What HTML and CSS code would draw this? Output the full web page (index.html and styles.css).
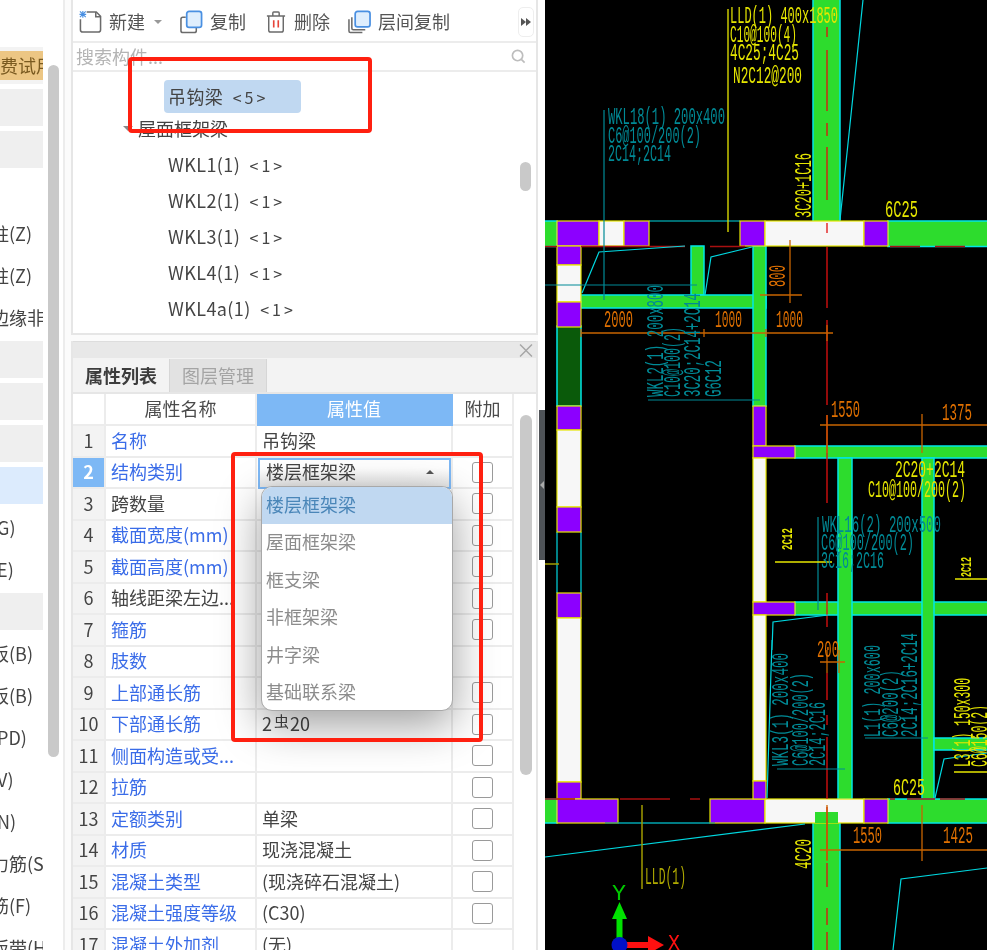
FILE: index.html
```html
<!DOCTYPE html>
<html lang="zh-CN">
<head>
<meta charset="utf-8">
<title>属性列表</title>
<link rel="stylesheet" href="styles.css">
</head>
<body>
<div class="app">
  <aside class="side">
    <div class="side-list">
      <div class="side-row trial"><span class="trial-tag">免费试用</span></div>
      <div class="side-row block"></div>
      <div class="side-row block"></div>
      <div class="side-row"></div>
      <div class="side-row">构造柱(Z)</div>
      <div class="side-row">砌体柱(Z)</div>
      <div class="side-row">约束边缘非阴影区</div>
      <div class="side-row block"></div>
      <div class="side-row block"></div>
      <div class="side-row block"></div>
      <div class="side-row current"></div>
      <div class="side-row">连梁(G)</div>
      <div class="side-row">圈梁(E)</div>
      <div class="side-row block"></div>
      <div class="side-row">现浇板(B)</div>
      <div class="side-row">螺旋板(B)</div>
      <div class="side-row">坡道(PD)</div>
      <div class="side-row">柱帽(V)</div>
      <div class="side-row">板洞(N)</div>
      <div class="side-row">板受力筋(S)</div>
      <div class="side-row">板负筋(F)</div>
      <div class="side-row">楼层板带(H)</div>
    </div>
    <div class="side-scroll"></div>
  </aside>

  <main class="mid">
    <section class="tree-panel">
      <div class="toolbar">
        <div class="tool tool-new">
          <svg class="ico" viewBox="0 0 24 24"><path class="ico-gray" d="M1.5 9v11a2.5 2.5 0 0 0 2.500 2.500h16a2.500 2.500 0 0 0 2.500-2.500V6l-4.500-4.500H8"/><path class="ico-gray" d="M17.500 1.500V6.500h5"/><path class="ico-star" d="M1 1l6 6M7 1L1 7M4 .5v7M.5 4h7"/></svg>
          <span>新建</span><i class="drop-caret"></i>
        </div>
        <div class="tool tool-copy">
          <svg class="ico" viewBox="0 0 24 24"><path class="ico-gray" d="M6 7H3a2 2 0 0 0-2 2v12a2 2 0 0 0 2 2h12a2 2 0 0 0 2-2v-3"/><rect class="ico-blue" x="7" y="1" width="15.500" height="16.500" rx="2.500"/></svg>
          <span>复制</span>
        </div>
        <div class="tool tool-del">
          <svg class="ico ico-del" viewBox="0 0 22 24"><path class="ico-gray" d="M1 5.500h20M7.500 5.500V2a1 1 0 0 1 1-1h5a1 1 0 0 1 1 1v3.500M3 5.500V21a2 2 0 0 0 2 2h12a2 2 0 0 0 2-2V5.500"/><path class="ico-red" d="M8.500 10v8M13.500 10v8"/></svg>
          <span>删除</span>
        </div>
        <div class="tool tool-layer">
          <svg class="ico" viewBox="0 0 24 24"><path class="ico-gray" d="M1 9v12.500a1.500 1.500 0 0 0 1.500 1.500H15"/><path class="ico-gray" d="M4 7v11.500a1.500 1.500 0 0 0 1.500 1.500H18"/><rect class="ico-blue" x="7.500" y="1" width="15.500" height="16" rx="2.500"/></svg>
          <span>层间复制</span>
        </div>
        <div class="more"><i></i><i></i></div>
      </div>
      <div class="search">
        <span>搜索构件...</span>
        <svg class="search-ico" viewBox="0 0 16 16"><circle cx="7" cy="7" r="5.500"/><path d="M11 11l3.500 3.500"/></svg>
      </div>
      <div class="tree">
        <div class="tree-list">
          <div class="node node-sel">吊钩梁 <em>&lt;5&gt;</em></div>
          <div class="node-group"><i class="tree-caret"></i>屋面框架梁</div>
          <div class="node">WKL1(1) <em>&lt;1&gt;</em></div>
          <div class="node">WKL2(1) <em>&lt;1&gt;</em></div>
          <div class="node">WKL3(1) <em>&lt;1&gt;</em></div>
          <div class="node">WKL4(1) <em>&lt;1&gt;</em></div>
          <div class="node">WKL4a(1) <em>&lt;1&gt;</em></div>
        </div>
        <div class="tree-scroll"></div>
      </div>
    </section>

    <section class="prop-panel">
      <div class="prop-title"><span class="close">×</span></div>
      <div class="tabs">
        <div class="tab tab-on">属性列表</div>
        <div class="tab">图层管理</div>
      </div>
      <div class="prop-body">
        <div class="table">
          <div class="row head">
            <div class="c c-no"></div><div class="c c-name">属性名称</div><div class="c c-val c-head-on">属性值</div><div class="c c-add">附加</div>
          </div>
          <div class="row"><div class="c c-no">1</div><div class="c c-name link">名称</div><div class="c c-val">吊钩梁</div><div class="c c-add"></div></div>
          <div class="row row-open"><div class="c c-no c-no-on">2</div><div class="c c-name link">结构类别</div>
            <div class="c c-val c-combo">
              <div class="combo">楼层框架梁<i class="combo-caret"></i></div>
              <ul class="menu">
                <li class="menu-on">楼层框架梁</li>
                <li>屋面框架梁</li>
                <li>框支梁</li>
                <li>非框架梁</li>
                <li>井字梁</li>
                <li>基础联系梁</li>
              </ul>
            </div>
            <div class="c c-add"><i class="check"></i></div></div>
          <div class="row"><div class="c c-no">3</div><div class="c c-name">跨数量</div><div class="c c-val"></div><div class="c c-add"><i class="check"></i></div></div>
          <div class="row"><div class="c c-no">4</div><div class="c c-name link">截面宽度(mm)</div><div class="c c-val"></div><div class="c c-add"><i class="check"></i></div></div>
          <div class="row"><div class="c c-no">5</div><div class="c c-name link">截面高度(mm)</div><div class="c c-val"></div><div class="c c-add"><i class="check"></i></div></div>
          <div class="row"><div class="c c-no">6</div><div class="c c-name">轴线距梁左边...</div><div class="c c-val"></div><div class="c c-add"><i class="check"></i></div></div>
          <div class="row"><div class="c c-no">7</div><div class="c c-name link">箍筋</div><div class="c c-val"></div><div class="c c-add"><i class="check"></i></div></div>
          <div class="row"><div class="c c-no">8</div><div class="c c-name link">肢数</div><div class="c c-val"></div><div class="c c-add"></div></div>
          <div class="row"><div class="c c-no">9</div><div class="c c-name link">上部通长筋</div><div class="c c-val"></div><div class="c c-add"><i class="check"></i></div></div>
          <div class="row"><div class="c c-no">10</div><div class="c c-name link">下部通长筋</div><div class="c c-val">2<span class="rebar">虫</span>20</div><div class="c c-add"><i class="check"></i></div></div>
          <div class="row"><div class="c c-no">11</div><div class="c c-name link">侧面构造或受...</div><div class="c c-val"></div><div class="c c-add"><i class="check"></i></div></div>
          <div class="row"><div class="c c-no">12</div><div class="c c-name link">拉筋</div><div class="c c-val"></div><div class="c c-add"><i class="check"></i></div></div>
          <div class="row"><div class="c c-no">13</div><div class="c c-name link">定额类别</div><div class="c c-val">单梁</div><div class="c c-add"><i class="check"></i></div></div>
          <div class="row"><div class="c c-no">14</div><div class="c c-name link">材质</div><div class="c c-val">现浇混凝土</div><div class="c c-add"><i class="check"></i></div></div>
          <div class="row"><div class="c c-no">15</div><div class="c c-name link">混凝土类型</div><div class="c c-val">(现浇碎石混凝土)</div><div class="c c-add"><i class="check"></i></div></div>
          <div class="row"><div class="c c-no">16</div><div class="c c-name link">混凝土强度等级</div><div class="c c-val">(C30)</div><div class="c c-add"><i class="check"></i></div></div>
          <div class="row"><div class="c c-no">17</div><div class="c c-name link">混凝土外加剂</div><div class="c c-val">(无)</div><div class="c c-add"></div></div>
        </div>
        <div class="prop-rail"><div class="prop-scroll"></div></div>
      </div>
    </section>
  </main>

  <div class="splitter"><div class="split-handle"><i></i></div></div>

  <svg class="cad" viewBox="0 0 442 950" width="442" height="950">
    <g class="beam">
      <rect x="268" y="-2" width="27" height="224"/>
      <rect x="-2" y="221" width="14" height="25.500"/>
      <rect x="343" y="221" width="101" height="25.500"/>
      <rect x="146" y="246" width="13" height="49"/>
      <rect x="36" y="295" width="185" height="13"/>
      <rect x="208" y="246" width="13" height="160"/>
      <rect class="beam-dark" x="12" y="326" width="24" height="80"/>
      <rect x="250" y="446" width="194" height="12"/>
      <rect x="250" y="602" width="194" height="13"/>
      <rect x="293" y="458" width="14" height="341"/>
      <rect x="377" y="458" width="12" height="341"/>
      <rect x="389" y="738" width="55" height="12"/>
      <rect x="-2" y="799" width="14" height="24"/>
      <rect x="343" y="799" width="101" height="24"/>
      <rect x="268" y="812" width="27" height="140"/>
    </g>
    <path class="cy" d="M12 532V593M36 532V593M104 221H195M73 823H165"/>
    <g class="wall">
      <rect class="pu" x="12" y="221" width="42" height="25"/>
      <rect class="wh" x="54" y="221" width="25" height="25"/>
      <rect class="pu" x="79" y="221" width="25" height="25"/>
      <rect class="pu" x="195" y="221" width="25" height="25"/>
      <rect class="wh" x="220" y="221" width="99" height="25"/>
      <rect class="pu" x="319" y="221" width="24" height="25"/>
      <rect class="pu" x="12" y="246" width="24" height="19"/>
      <rect class="wh" x="12" y="265" width="24" height="37"/>
      <rect class="pu" x="12" y="302" width="24" height="25"/>
      <rect class="pu" x="12" y="406" width="24" height="24"/>
      <rect class="wh" x="12" y="430" width="24" height="77"/>
      <rect class="pu" x="12" y="507" width="24" height="25"/>
      <rect class="pu" x="12" y="593" width="24" height="25"/>
      <rect class="wh" x="12" y="618" width="24" height="164"/>
      <rect class="pu" x="12" y="782" width="24" height="17"/>
      <rect class="pu" x="12" y="799" width="61" height="24"/>
      <rect class="pu" x="165" y="799" width="55" height="24"/>
      <rect class="wh" x="220" y="799" width="99" height="24"/>
      <rect class="pu" x="319" y="799" width="24" height="24"/>
      <rect class="pu" x="208" y="406" width="13" height="40"/>
      <rect class="pu" x="208" y="446" width="42" height="12"/>
      <rect class="wh" x="208" y="458" width="13" height="144"/>
      <rect class="pu" x="208" y="602" width="42" height="13"/>
      <rect class="wh" x="208" y="615" width="13" height="166"/>
      <rect class="pu" x="208" y="781" width="13" height="18"/>
    </g>
    <rect class="notch" x="270" y="812" width="23" height="11"/>

    <path class="red" d="M282 27V37M282 50V111M282 123V136M282 147V200M282 223V233M282 247V308M282 320V405M282 415V503M282 593V627M282 673V700M282 715V725M282 737V799M282 807V860M282 863V887M282 908V925M282 932V950"/>
    <path class="red-dark" d="M0 246.500H12M36 246.500H140M165 246.500H200M345 246.500H375M390 246.500H420M0 799H30M75 799H125M145 799H155M345 799H350M362 799H390M395 799H420"/>
    <path class="cy" d="M318 0L295 220M37 293L54 252L140 246M160 295L166 257L207 247M227 650L228 622L283 615M0 857L260 824M227 640L222 798M348 950L356 879L442 868M390 798L399 759L442 753"/>
    <path class="te" d="M59 110V300M0 285H152M103 400H215M273 517V610M232 769H300M320 738H383M60 823H170"/>
    <path class="ye" d="M183 9V232M230 562H287M410 579H442M409 772H442"/>
    <path class="ol" d="M97 805V889M0 564H14"/>
    <path class="or" d="M36 333H288M245 240V303M215 295H257M36 333m0-4v8M159 329v8M221 329v8M282 325v16M275 425H442M282 415V453M377 414V453M275 662H300M282 650V673M294 650V673M275 850H442M282 805V861M377 805V861"/>

    <g class="t-ye">
      <text x="185" y="23" textLength="108" lengthAdjust="spacingAndGlyphs">LLD(1) 400x1850</text>
      <text x="185" y="42" textLength="67" lengthAdjust="spacingAndGlyphs">C10@100(4)</text>
      <text x="185" y="60" textLength="69" lengthAdjust="spacingAndGlyphs">4C25;4C25</text>
      <text x="188" y="83" textLength="69" lengthAdjust="spacingAndGlyphs">N2C12@200</text>
      <text transform="translate(266 218) rotate(-90)" textLength="65" lengthAdjust="spacingAndGlyphs">3C20+1C16</text>
      <text x="340" y="217" textLength="33" lengthAdjust="spacingAndGlyphs">6C25</text>
      <text x="350" y="477" textLength="70" lengthAdjust="spacingAndGlyphs">2C20+2C14</text>
      <text x="323" y="497" textLength="98" lengthAdjust="spacingAndGlyphs">C10@100/200(2)</text>
      <text transform="translate(425 767) rotate(-90)" textLength="89" lengthAdjust="spacingAndGlyphs">L3(1) 150x300</text>
      <text transform="translate(442 767) rotate(-90)" textLength="62" lengthAdjust="spacingAndGlyphs">C6@150(2)</text>
      <text x="348" y="795" textLength="32" lengthAdjust="spacingAndGlyphs">6C25</text>
      <text transform="translate(266 869) rotate(-90)" textLength="30" lengthAdjust="spacingAndGlyphs">4C20</text>
      <text class="t-tiny" transform="translate(247 550) rotate(-90)" textLength="22" lengthAdjust="spacingAndGlyphs">2C12</text>
      <text class="t-tiny" transform="translate(426 577) rotate(-90)" textLength="20" lengthAdjust="spacingAndGlyphs">2C12</text>
    </g>
    <g class="t-ol">
      <text x="100" y="884" textLength="41" lengthAdjust="spacingAndGlyphs">LLD(1)</text>
    </g>
    <g class="t-te">
      <text x="63" y="124" textLength="117" lengthAdjust="spacingAndGlyphs">WKL18(1) 200x400</text>
      <text x="63" y="143" textLength="93" lengthAdjust="spacingAndGlyphs">C6@100/200(2)</text>
      <text x="63" y="161" textLength="63" lengthAdjust="spacingAndGlyphs">2C14;2C14</text>
      <text transform="translate(118 397) rotate(-90)" textLength="112" lengthAdjust="spacingAndGlyphs">WKL2(1) 200x800</text>
      <text transform="translate(135 397) rotate(-90)" textLength="70" lengthAdjust="spacingAndGlyphs">C10@100(2)</text>
      <text transform="translate(155 397) rotate(-90)" textLength="104" lengthAdjust="spacingAndGlyphs">3C20;2C14+2C14</text>
      <text transform="translate(176 397) rotate(-90)" textLength="37" lengthAdjust="spacingAndGlyphs">G6C12</text>
      <text x="277" y="532" textLength="119" lengthAdjust="spacingAndGlyphs">WKL16(2) 200x500</text>
      <text x="276" y="550" textLength="93" lengthAdjust="spacingAndGlyphs">C6@100/200(2)</text>
      <text x="276" y="568" textLength="63" lengthAdjust="spacingAndGlyphs">3C16;2C16</text>
      <text transform="translate(243 766) rotate(-90)" textLength="113" lengthAdjust="spacingAndGlyphs">WKL3(1) 200x400</text>
      <text transform="translate(263 766) rotate(-90)" textLength="93" lengthAdjust="spacingAndGlyphs">C6@100/200(2)</text>
      <text transform="translate(280 766) rotate(-90)" textLength="64" lengthAdjust="spacingAndGlyphs">2C14;2C16</text>
      <text transform="translate(335 737) rotate(-90)" textLength="92" lengthAdjust="spacingAndGlyphs">L1(1) 200x600</text>
      <text transform="translate(353 737) rotate(-90)" textLength="67" lengthAdjust="spacingAndGlyphs">C6@200(2)</text>
      <text transform="translate(372 737) rotate(-90)" textLength="104" lengthAdjust="spacingAndGlyphs">2C14;2C16+2C14</text>
    </g>
    <g class="t-or">
      <text x="59" y="327" textLength="29" lengthAdjust="spacingAndGlyphs">2000</text>
      <text x="170" y="327" textLength="27" lengthAdjust="spacingAndGlyphs">1000</text>
      <text x="231" y="327" textLength="27" lengthAdjust="spacingAndGlyphs">1000</text>
      <text transform="translate(240 287) rotate(-90)" textLength="22" lengthAdjust="spacingAndGlyphs">800</text>
      <text x="286" y="417" textLength="29" lengthAdjust="spacingAndGlyphs">1550</text>
      <text x="397" y="420" textLength="30" lengthAdjust="spacingAndGlyphs">1375</text>
      <text x="272" y="657" textLength="22" lengthAdjust="spacingAndGlyphs">200</text>
      <text x="308" y="843" textLength="29" lengthAdjust="spacingAndGlyphs">1550</text>
      <text x="398" y="843" textLength="30" lengthAdjust="spacingAndGlyphs">1425</text>
    </g>

    <g class="axis">
      <text class="axis-y" x="67" y="900" textLength="14" lengthAdjust="spacingAndGlyphs">Y</text>
      <path class="axis-y-arrow" d="M71.500 919H77.500V940H71.500ZM74.500 902L82 919H67Z"/>
      <path class="axis-x-arrow" d="M82 942H103V936L119 945L103 954V948H82Z"/>
      <circle class="axis-o" cx="74.500" cy="945" r="8"/>
      <text class="axis-x" x="123" y="950" textLength="12" lengthAdjust="spacingAndGlyphs">X</text>
    </g>
  </svg>

  <div class="mark mark-tree"></div>
  <div class="mark mark-menu"></div>
</div>
</body>
</html>
```

FILE: styles.css
```css
* { box-sizing: border-box; }
html, body { margin: 0; padding: 0; background: #fff; }
body { width: 987px; height: 950px; overflow: hidden; }

.app {
  position: relative;
  display: flex;
  width: 987px;
  height: 950px;
  overflow: hidden;
  background: #fbfbfb;
  color: #444;
  font: 18px/1.2 "Noto Sans CJK SC", "Noto Sans", sans-serif;
  filter: blur(.45px);
}

/* left list */
.side {
  flex: 0 0 65px;
  display: flex;
  padding-top: 47px;
  background: #fff;
  border-right: 2px solid #ececec;
}
.side-list {
  flex: 0 0 43px;
  display: flex;
  flex-direction: column;
  gap: 5px;
  overflow: hidden;
  background: #fff;
}
.side-row {
  flex: 0 0 37px;
  line-height: 37px;
  white-space: nowrap;
  overflow: hidden;
  text-indent: -45px;
}
.side-row.block { background: #efefef; }
.side-row.current { background: #dcebfd; }
.side-row.trial { background: #f3f3f3; padding-top: 4px; }
.trial-tag {
  display: block;
  height: 29px;
  line-height: 29px;
  text-indent: -18px;
  background: #ecc684;
  color: #7a5a20;
}
.side-scroll {
  flex: 0 0 11px;
  height: 692px;
  margin: 18px 0 0 5px;
  border-radius: 6px;
  background: #c9c9c9;
}

/* middle column */
.mid {
  flex: 0 0 473px;
  display: flex;
  flex-direction: column;
  padding: 0 0 0 6px;
}
.tree-panel {
  flex: 0 0 335px;
  display: flex;
  flex-direction: column;
  border: 2px solid #e6e6e6;
  border-top: 0;
  background: #fff;
}
.toolbar {
  flex: 0 0 43px;
  display: flex;
  align-items: center;
  padding: 2px 0 0 6px;
  border-bottom: 2px solid #ececec;
  color: #555;
}
.tool { display: flex; align-items: center; gap: 7px; }
.ico { width: 23px; height: 24px; flex: none; }
.ico-del { width: 20px; }
.tool-new { flex: 0 0 101px; }
.tool-copy { flex: 0 0 86px; }
.tool-del { flex: 0 0 82px; gap: 8px; }
.tool-layer { flex: 0 0 auto; }
.ico-gray { fill: none; stroke: #6b6b6b; stroke-width: 1.6; }
.ico-blue { fill: #dfeefd; stroke: #4a90e2; stroke-width: 1.8; }
.ico-red { fill: none; stroke: #e6443a; stroke-width: 1.8; }
.ico-star { fill: none; stroke: #4a90e2; stroke-width: 1.2; }
.drop-caret {
  width: 0; height: 0;
  margin-left: 2px;
  border: 4px solid transparent;
  border-top: 4px solid #999;
  border-bottom: 0;
}
.more {
  display: flex;
  align-items: center;
  justify-content: center;
  width: 16px;
  height: 30px;
  margin-left: auto;
  margin-right: 2px;
  border: 1px solid #eee;
  border-radius: 5px;
}
.more i {
  width: 0; height: 0;
  border-left: 5px solid #555;
  border-top: 4px solid transparent;
  border-bottom: 4px solid transparent;
}
.search {
  flex: 0 0 29px;
  display: flex;
  align-items: center;
  justify-content: space-between;
  padding: 0 10px 0 3px;
  border-bottom: 2px solid #ececec;
  color: #b4b4b4;
}
.search-ico { width: 15px; height: 15px; fill: none; stroke: #bdbdbd; stroke-width: 1.8; }
.tree { flex: 1; display: flex; }
.tree-list { flex: 1; padding: 8px 0 0 91px; }
.node {
  height: 36px;
  line-height: 36px;
  padding-left: 4px;
  white-space: nowrap;
  letter-spacing: .4px;
}
.node em { font-style: normal; margin-left: 5px; font-size: 16px; letter-spacing: 3px; }
.node-sel {
  width: 137px;
  height: 33px;
  line-height: 33px;
  border-radius: 4px;
  background: #c0d8f1;
  margin-bottom: 1px;
}
.node-group {
  position: relative;
  height: 30px;
  line-height: 28px;
  margin-left: -26px;
  margin-bottom: 2px;
}
.tree-caret {
  position: absolute;
  left: -15px;
  top: 12px;
  width: 0; height: 0;
  border: 5px solid transparent;
  border-top: 5px solid #888;
  border-bottom: 0;
}
.tree-scroll {
  flex: 0 0 11px;
  height: 29px;
  margin: 90px 5px 0 0;
  border-radius: 6px;
  background: #c9c9c9;
}

/* property panel */
.prop-panel {
  flex: 1;
  display: flex;
  flex-direction: column;
  margin-top: 6px;
  border-left: 2px solid #e6e6e6;
  border-right: 2px solid #e6e6e6;
  background: #fff;
  min-height: 0;
}
.prop-title {
  flex: 0 0 17px;
  display: flex;
  justify-content: flex-end;
  align-items: center;
  background: #e8e8e8;
  border-top: 1px solid #ddd;
  color: #a6a6a6;
  font-size: 20px;
}
.close { line-height: 16px; }
.tabs {
  flex: 0 0 34px;
  display: flex;
  align-items: flex-end;
  background: #f3f3f3;
  padding-top: 1px;
  border-bottom: 2px solid #e6e6e6;
}
.tab {
  width: 97px;
  height: 33px;
  line-height: 32px;
  text-align: center;
  background: #e2e2e2;
  color: #a4a4a4;
  border-right: 1px solid #d6d6d6;
}
.tab-on { background: #f3f3f3; color: #3d3d3d; font-weight: 700; }
.prop-body { flex: 1; display: flex; min-height: 0; }
.table { flex: 0 0 441px; }
.row {
  display: grid;
  grid-template-columns: 33px 151px 196px 61px;
  height: 31.500px;
}
.head { height: 32px; }
.c {
  display: flex;
  align-items: center;
  padding-left: 5px;
  white-space: nowrap;
  border-right: 2px solid #ececec;
  border-bottom: 2px solid #ececec;
  min-width: 0;
}
.c-no { justify-content: center; padding-left: 0; background: #f3f3f3; }
.c-no-on { background: #7db8f5; color: #fff; font-weight: 700; }
.c-name { overflow: hidden; }
.head .c { justify-content: center; background: #fff; color: #4a4a4a; padding: 0 0 1px; }
.head .c-no { background: #fff; }
.head .c-head-on { background: #7db8f5; color: #fff; border-color: #7db8f5; }
.link { color: #3a6ce8; }
.c-val { padding-left: 5px; }
.c-add { justify-content: center; padding-left: 0; }
.check {
  width: 21px;
  height: 21px;
  border: 1.500px solid #9a9a9a;
  border-radius: 3px;
  background: #fff;
}
.rebar { font-size: 15px; margin: 0 1px 0 2px; position: relative; top: -3px; }

.row-open { position: relative; z-index: 3; }
.c-combo { position: relative; padding: 0; border-bottom: 0; }
.combo {
  display: flex;
  align-items: center;
  justify-content: space-between;
  width: 195px;
  height: 31px;
  margin-left: 1px;
  padding: 0 15px 2px 6px;
  border: 2px solid #7db8f5;
  background: linear-gradient(#fff 30%, #e4e4e4);
}
.combo-caret {
  width: 0; height: 0;
  border: 4px solid transparent;
  border-bottom: 4px solid #555;
  border-top: 0;
}
.menu {
  position: absolute;
  left: 4px;
  top: 28px;
  width: 192px;
  height: 225px;
  margin: 0;
  padding: 0;
  list-style: none;
  overflow: hidden;
  background: #fff;
  border: 1px solid #a8a8a8;
  border-radius: 11px;
  color: #8c8c8c;
  box-shadow: 0 14px 44px rgba(0, 0, 0, .38);
}
.menu li { height: 37.500px; line-height: 34px; padding-left: 4px; }
.menu .menu-on { background: #c0d8f1; color: #4a86b8; }

.prop-rail { flex: 1; padding: 21px 0 0 6px; }
.prop-scroll { width: 12px; height: 360px; border-radius: 6px; background: #c9c9c9; }

/* splitter */
.splitter {
  flex: 0 0 7px;
  background: #fff;
  display: flex;
  padding-top: 410px;
}
.split-handle {
  width: 6px;
  height: 150px;
  margin-left: 1px;
  display: flex;
  align-items: center;
  justify-content: center;
  background: #4f5357;
}
.split-handle i {
  width: 0; height: 0;
  border-right: 4px solid #aaa;
  border-top: 4px solid transparent;
  border-bottom: 4px solid transparent;
}

/* drawing */
.cad { flex: 0 0 442px; display: block; background: #000; }
.beam rect { fill: #2ddc2d; stroke: #00e6e6; stroke-width: 1.500; }
.beam .beam-dark { fill: #0a5a0a; }
.wall rect { stroke: #e6e600; stroke-width: 1.200; }
.pu { fill: #8c00ff; }
.wh { fill: #f7f7f7; }
.notch { fill: #2ddc2d; }
.red { fill: none; stroke: #e01010; stroke-width: 1.300; }
.red-dark { fill: none; stroke: #a81010; stroke-width: 1.500; }
.cy { fill: none; stroke: #00d8e0; stroke-width: 1.200; }
.te { fill: none; stroke: #008a96; stroke-width: 1.200; }
.ye { fill: none; stroke: #e6e600; stroke-width: 1.300; }
.ol { fill: none; stroke: #a09a00; stroke-width: 1.500; }
.or { fill: none; stroke: #c86400; stroke-width: 1.300; }
.cad text { font-family: "Liberation Mono", monospace; font-size: 23px; }
.t-ye text { fill: #e6e600; }
.t-te text { fill: #008a96; }
.t-or text { fill: #e07000; }
.t-ol text { fill: #b0aa00; }
.cad .t-tiny { font-size: 14px; font-weight: 700; }
.axis-y { fill: #00c800; }
.axis-x { fill: #ff1010; }
.cad .axis-y, .cad .axis-x { font-size: 22px; }
.axis-y-arrow { fill: #00e000; }
.axis-x-arrow { fill: #ff1010; }
.axis-o { fill: #0010c8; }

/* red annotation boxes */
.mark {
  position: absolute;
  border: 4px solid #ff2010;
  border-radius: 4px;
}
.mark-tree { left: 128px; top: 57px; width: 244px; height: 76px; }
.mark-menu { left: 231px; top: 452px; width: 252px; height: 290px; z-index: 5; }
```
